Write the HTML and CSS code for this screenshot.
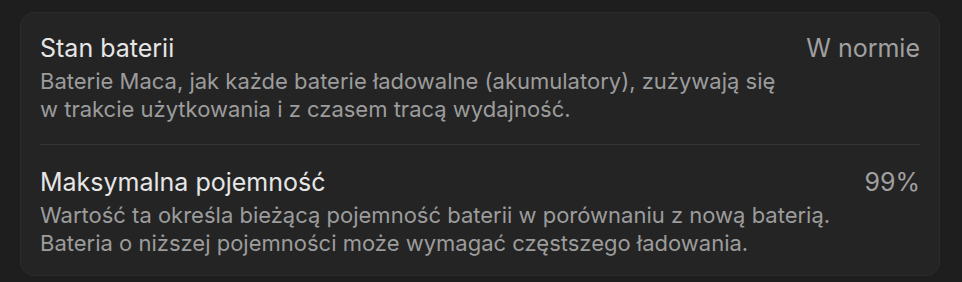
FILE: index.html
```html
<!DOCTYPE html>
<html lang="pl">
<head>
  <meta charset="UTF-8">
  <meta name="viewport" content="width=device-width, initial-scale=1.0">
  <title>Bateria</title>
  <link rel="stylesheet" href="styles.css">
</head>
<body>
  <div class="card">
    <div class="row">
      <div class="info">
        <div class="title">Stan baterii</div>
        <div class="desc">Baterie Maca, jak każde baterie ładowalne (akumulatory), zużywają się<br>w trakcie użytkowania i z czasem tracą wydajność.</div>
      </div>
      <div class="value">W normie</div>
    </div>
    <div class="row">
      <div class="info">
        <div class="title">Maksymalna pojemność</div>
        <div class="desc">Wartość ta określa bieżącą pojemność baterii w porównaniu z nową baterią.<br>Bateria o niższej pojemności może wymagać częstszego ładowania.</div>
      </div>
      <div class="value">99%</div>
    </div>
  </div>
</body>
</html>
```

FILE: styles.css
```css
body { margin: 0; background: #1e1e1e; font-family: Inter, "Noto Sans", sans-serif; padding: 12px 22px 0 20px; }
.card { background: #242424; border: 1px solid #2b2b2b; border-radius: 14px; padding: 0 19px; }
.row { display: flex; justify-content: space-between; gap: 20px; padding: 20px 0 21px; }
.row + .row { border-top: 1px solid #363636; padding: 22px 0 18px; }
.info { flex: 1; min-width: 0; }
.title { color: #e6e6e6; font-size: 25px; line-height: 30px; }
.desc { color: #9c9c9c; font-size: 22px; line-height: 27.5px; margin-top: 5px; white-space: nowrap; }
.value { color: #a0a0a0; font-size: 25px; line-height: 30px; }
```
